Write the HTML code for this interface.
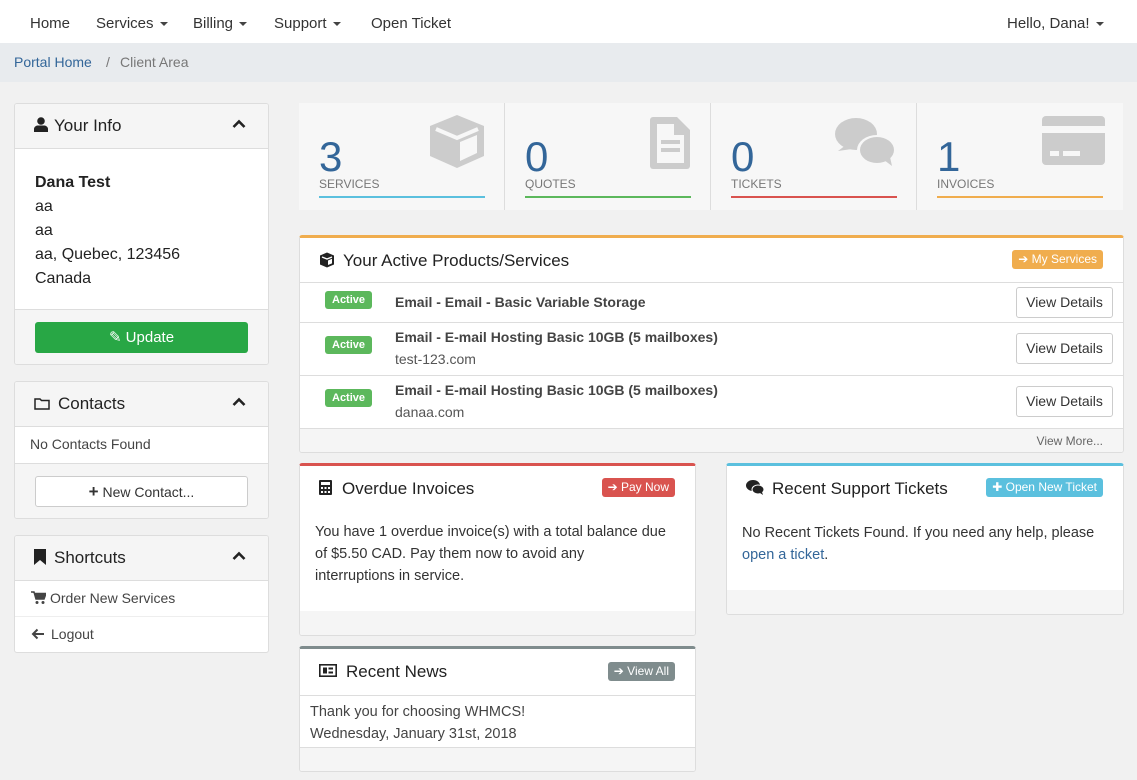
<!DOCTYPE html>
<html><head><meta charset="utf-8"><style>
*{box-sizing:border-box;margin:0;padding:0}
body{width:1137px;height:780px;background:#f1f1f1;font-family:"Liberation Sans",sans-serif;color:#333;font-size:14px;position:relative;overflow:hidden}
.a{position:absolute}
.nav{left:0;top:0;width:1137px;height:43px;background:#fff}
.nav span{position:absolute;top:15px;font-size:15px;color:#333}
.car{display:inline-block;width:0;height:0;border-left:4px solid transparent;border-right:4px solid transparent;border-top:4px solid #444;vertical-align:middle;margin-left:6px}
.bc{left:0;top:43px;width:1137px;height:39px;background:#e8ebee;font-size:14px}
.panel{background:#fff;border:1px solid #ddd;border-radius:3px;overflow:hidden}
.ph{background:#f5f5f5;border-bottom:1px solid #ddd;height:45px;font-size:17px;padding:12px 0 0 19px;position:relative;color:#222}
.chev{position:absolute;right:22px;top:15px}
.pf{background:#f5f5f5}
.tile{top:103px;height:107px;background:#f7f7f7;width:206px}
.tile .n{position:absolute;left:20px;top:30px;font-size:42px;color:#336699;font-weight:300}
.tile .l{position:absolute;left:20px;top:74px;font-size:12px;color:#777}
.tile .u{position:absolute;left:20px;right:20px;top:93px;height:2px}
.btn{position:absolute;border-radius:3px;color:#fff;font-size:12px;padding:2px 6px;height:19px}
.vd{position:absolute;right:10px;width:97px;height:31px;border:1px solid #ccc;border-radius:3px;background:#fff;font-size:14px;text-align:center;line-height:29px;color:#333}
.act{position:absolute;left:25px;background:#5cb85c;color:#fff;font-size:11px;font-weight:bold;padding:3px 7px;border-radius:3px}
.row{position:absolute;left:0;right:0;border-top:1px solid #ddd}
.nm{position:absolute;left:95px;font-weight:bold;font-size:14px;color:#444}
.dm{position:absolute;left:95px;font-size:14px;color:#555}
</style></head><body>
<div class="a nav">
<span style="left:30px">Home</span>
<span style="left:96px">Services<i class="car"></i></span>
<span style="left:193px">Billing<i class="car"></i></span>
<span style="left:274px">Support<i class="car"></i></span>
<span style="left:371px">Open Ticket</span>
<span style="left:1007px">Hello, Dana!<i class="car"></i></span>
</div>
<div class="a bc"><span class="a" style="left:14px;top:11px;color:#336699">Portal Home</span><span class="a" style="left:106px;top:11px;color:#777">/</span><span class="a" style="left:120px;top:11px;color:#777">Client Area</span></div>

<div class="a panel" style="left:14px;top:103px;width:255px;height:262px">
<div class="ph"><svg width="14" height="15" viewBox="0 0 14 15" style="vertical-align:-1px;margin-right:6px"><circle cx="7" cy="4" r="3.8" fill="#222"/><path d="M0 15v-3c0-2 2-3.5 4-3.5h6c2 0 4 1.5 4 3.5v3z" fill="#222"/></svg>Your Info<svg class="chev" width="14" height="10" viewBox="0 0 14 10"><path d="M1.5 8L7 2.5 12.5 8" stroke="#222" stroke-width="2.6" fill="none"/></svg></div>
<div style="padding:22px 0 0 20px;font-size:16px;line-height:24px;color:#222;height:160px"><b>Dana Test</b><br>aa<br>aa<br>aa, Quebec, 123456<br>Canada</div>
<div class="pf" style="border-top:1px solid #ddd;height:56px;position:relative"><div class="a" style="left:20px;top:12px;width:213px;height:31px;background:#28a745;border-radius:3px;color:#fff;text-align:center;line-height:31px;font-size:15px">✎ Update</div></div>
</div>

<div class="a panel" style="left:14px;top:381px;width:255px;height:138px">
<div class="ph"><svg width="16" height="13" viewBox="0 0 16 13" style="vertical-align:-1px;margin-right:8px"><path d="M1 2h5l1.5 1.5H15V12H1z" stroke="#222" stroke-width="1.5" fill="none"/></svg>Contacts<svg class="chev" width="14" height="10" viewBox="0 0 14 10"><path d="M1.5 8L7 2.5 12.5 8" stroke="#222" stroke-width="2.6" fill="none"/></svg></div>
<div style="height:36px;padding:9px 0 0 15px;color:#444">No Contacts Found</div>
<div class="pf" style="border-top:1px solid #ddd;height:56px;position:relative"><div class="a" style="left:20px;top:12px;width:213px;height:31px;background:#fff;border:1px solid #ccc;border-radius:3px;text-align:center;line-height:29px;font-size:14px;color:#333"><b style="font-size:17px">+</b> New Contact...</div></div>
</div>

<div class="a panel" style="left:14px;top:535px;width:255px;height:118px">
<div class="ph"><svg width="12" height="16" viewBox="0 0 12 16" style="vertical-align:-2px;margin-right:8px"><path d="M0 0h12v16L6 11 0 16z" fill="#222"/></svg>Shortcuts<svg class="chev" width="14" height="10" viewBox="0 0 14 10"><path d="M1.5 8L7 2.5 12.5 8" stroke="#222" stroke-width="2.6" fill="none"/></svg></div>
<div style="height:36px;padding:9px 0 0 16px;color:#444;border-bottom:1px solid #eee"><svg width="15" height="13" viewBox="0 0 15 13" style="vertical-align:-1px;margin-right:4px"><path d="M0 1h3l2 7h8l2-5.5H4" fill="#444" stroke="#444" stroke-width="1.5"/><circle cx="6" cy="11.5" r="1.5" fill="#444"/><circle cx="12" cy="11.5" r="1.5" fill="#444"/></svg>Order New Services</div>
<div style="height:36px;padding:9px 0 0 16px;color:#444"><svg width="14" height="12" viewBox="0 0 14 12" style="vertical-align:-1px;margin-right:6px"><path d="M13 6H2M6.5 1.5L2 6l4.5 4.5" stroke="#444" stroke-width="2" fill="none"/></svg>Logout</div>
</div>

<div class="a tile" style="left:299px"><div class="n">3</div><div class="l">SERVICES</div><div class="u" style="background:#5bc0de"></div>
<svg class="a" style="left:129px;top:10px" width="58" height="56" viewBox="0 0 58 56"><path d="M29 2L56 13v30L29 55 2 43V13z" fill="#ccc"/><path d="M8 16l21 9 21-9" stroke="#f7f7f7" stroke-width="4" fill="none"/><path d="M32 29l17-7v18l-17 8z" fill="#f7f7f7"/></svg></div>
<div class="a tile" style="left:505px"><div class="n">0</div><div class="l">QUOTES</div><div class="u" style="background:#5cb85c"></div>
<svg class="a" style="left:143px;top:12px" width="44" height="56" viewBox="0 0 44 56"><path d="M5 2h24l13 13v36a3 3 0 0 1-3 3H5a3 3 0 0 1-3-3V5a3 3 0 0 1 3-3z" fill="#ccc"/><path d="M9 9h17v11h10v28H9z" fill="#f7f7f7"/><rect x="13" y="25" width="19" height="4" fill="#ccc"/><rect x="13" y="33" width="19" height="4" fill="#ccc"/></svg></div>
<div class="a tile" style="left:711px"><div class="n">0</div><div class="l">TICKETS</div><div class="u" style="background:#d9534f"></div>
<svg class="a" style="left:123px;top:14px" width="64" height="52" viewBox="0 0 64 52"><ellipse cx="22" cy="17" rx="21" ry="16" fill="#ccc"/><path d="M4 34l8-6 6 4z" fill="#ccc"/><ellipse cx="43" cy="33" rx="20" ry="15" fill="#f7f7f7"/><ellipse cx="43" cy="33" rx="17" ry="13" fill="#ccc"/><path d="M58 49l-8-6 6-3z" fill="#ccc"/></svg></div>
<div class="a tile" style="left:917px"><div class="n">1</div><div class="l">INVOICES</div><div class="u" style="background:#f0ad4e"></div>
<svg class="a" style="left:125px;top:13px" width="63" height="49" viewBox="0 0 63 49"><rect x="0" y="0" width="63" height="49" rx="4" fill="#ccc"/><rect x="0" y="10" width="63" height="7" fill="#f7f7f7"/><rect x="8" y="35" width="9" height="5" fill="#f7f7f7"/><rect x="21" y="35" width="17" height="5" fill="#f7f7f7"/></svg></div>
<div class="a" style="left:504px;top:103px;width:1px;height:107px;background:#ddd"></div>
<div class="a" style="left:710px;top:103px;width:1px;height:107px;background:#ddd"></div>
<div class="a" style="left:916px;top:103px;width:1px;height:107px;background:#ddd"></div>

<div class="a panel" style="left:299px;top:235px;width:825px;height:218px;border-top:3px solid #f0ad4e">
<div style="position:absolute;left:19px;top:13px;font-size:17px;color:#222"><svg width="16" height="16" viewBox="0 0 16 16" style="vertical-align:-2px;margin-right:8px"><path d="M8 0.5L15 3.5v9L8 15.5 1 12.5v-9z" fill="#222"/><path d="M3 5l5 2 5-2" stroke="#fff" stroke-width="1.4" fill="none"/><path d="M9 8.5l4-1.7v4.6L9 13z" fill="#fff"/></svg>Your Active Products/Services</div>
<div class="btn" style="right:20px;top:12px;background:#f0ad4e">➔ My Services</div>
<div class="row" style="top:44px;height:40px"><span class="act" style="top:8px">Active</span><span class="nm" style="top:11px">Email - Email - Basic Variable Storage</span><div class="vd" style="top:4px">View Details</div></div>
<div class="row" style="top:84px;height:53px"><span class="act" style="top:13px">Active</span><span class="nm" style="top:6px">Email - E-mail Hosting Basic 10GB (5 mailboxes)</span><span class="dm" style="top:28px">test-123.com</span><div class="vd" style="top:10px">View Details</div></div>
<div class="row" style="top:137px;height:53px"><span class="act" style="top:13px">Active</span><span class="nm" style="top:6px">Email - E-mail Hosting Basic 10GB (5 mailboxes)</span><span class="dm" style="top:28px">danaa.com</span><div class="vd" style="top:10px">View Details</div></div>
<div class="row pf" style="top:190px;height:30px"><span class="a" style="right:20px;top:5px;font-size:12px;color:#666">View More...</span></div>
</div>

<div class="a panel" style="left:299px;top:463px;width:397px;height:173px;border-top:3px solid #d9534f">
<div style="position:absolute;left:19px;top:13px;font-size:17px;color:#222"><svg width="13" height="15" viewBox="0 0 13 15" style="vertical-align:-1px;margin-right:10px"><rect width="13" height="15" rx="1" fill="#222"/><rect x="2" y="2" width="9" height="3" fill="#fff"/><g fill="#fff"><rect x="2" y="7" width="2" height="2"/><rect x="5.5" y="7" width="2" height="2"/><rect x="9" y="7" width="2" height="2"/><rect x="2" y="11" width="2" height="2"/><rect x="5.5" y="11" width="2" height="2"/><rect x="9" y="11" width="2" height="2"/></g></svg>Overdue Invoices</div>
<div class="btn" style="right:20px;top:12px;background:#d9534f">➔ Pay Now</div>
<div style="position:absolute;left:15px;top:55px;width:375px;font-size:14.5px;line-height:22px;color:#333">You have 1 overdue invoice(s) with a total balance due<br>of $5.50 CAD. Pay them now to avoid any<br>interruptions in service.</div>
<div class="pf" style="position:absolute;left:0;right:0;bottom:0;height:24px"></div>
</div>

<div class="a panel" style="left:726px;top:463px;width:398px;height:152px;border-top:3px solid #5bc0de">
<div style="position:absolute;left:19px;top:13px;font-size:17px;color:#222"><svg width="18" height="15" viewBox="0 0 18 15" style="vertical-align:-1px;margin-right:8px"><ellipse cx="7" cy="5.5" rx="7" ry="5.5" fill="#222"/><ellipse cx="12" cy="9.5" rx="6" ry="4.5" fill="#222" stroke="#fff" stroke-width="1"/><path d="M17 15l-3-2 2-1z" fill="#222"/></svg>Recent Support Tickets</div>
<div class="btn" style="right:20px;top:12px;background:#5bc0de">✚ Open New Ticket</div>
<div style="position:absolute;left:15px;top:56px;width:375px;font-size:14.5px;line-height:22px;color:#333">No Recent Tickets Found. If you need any help, please <span style="color:#336699">open a ticket</span>.</div>
<div class="pf" style="position:absolute;left:0;right:0;bottom:0;height:24px"></div>
</div>

<div class="a panel" style="left:299px;top:646px;width:397px;height:126px;border-top:3px solid #7f8c8d">
<div style="position:absolute;left:19px;top:13px;font-size:17px;color:#222"><svg width="18" height="13" viewBox="0 0 18 13" style="vertical-align:0px;margin-right:9px"><rect x="0.8" y="0.8" width="16.4" height="11.4" stroke="#222" stroke-width="1.6" fill="none"/><rect x="4" y="3.5" width="4" height="6" fill="#222"/><rect x="9.5" y="3.5" width="4.5" height="2" fill="#222"/><rect x="9.5" y="7.5" width="4.5" height="2" fill="#222"/></svg>Recent News</div>
<div class="btn" style="right:20px;top:13px;background:#7f8c8d">➔ View All</div>
<div style="position:absolute;left:0;right:0;top:46px;border-top:1px solid #ddd;padding:5px 10px;font-size:14.5px;line-height:22px;color:#444;height:53px">Thank you for choosing WHMCS!<br>Wednesday, January 31st, 2018</div>
<div class="pf" style="position:absolute;left:0;right:0;bottom:0;height:24px;border-top:1px solid #ddd"></div>
</div>
</body></html>
